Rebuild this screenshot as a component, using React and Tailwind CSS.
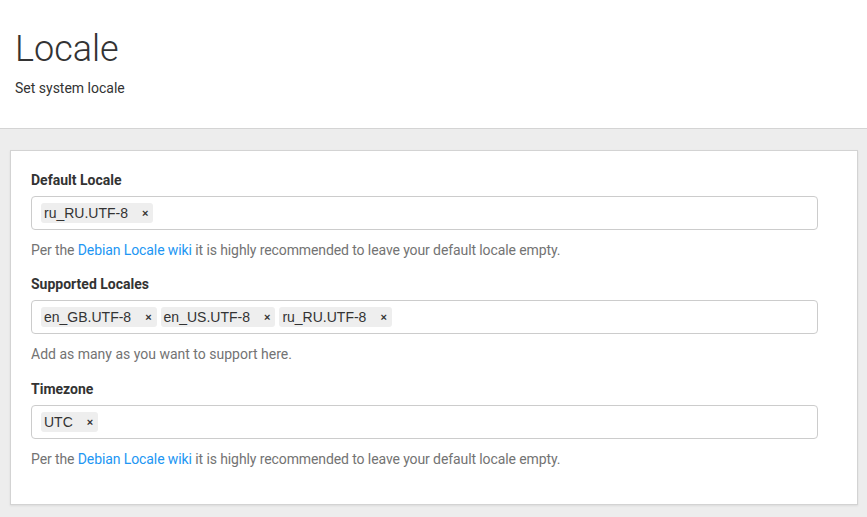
import React from "react";

function Tag({ text }) {
  return (
    <span className="inline-flex items-center h-[20px] bg-[#eeeeee] rounded-[3px] pl-[3px] pr-[5px] text-[14px] text-[#333] font-['Liberation_Sans',Arial,sans-serif] leading-[20px]">
      <span>{text}</span>
      <span className="ml-[14px] text-[11px] font-bold text-[#333] leading-none">×</span>
    </span>
  );
}

function Group({ label, tags, help, gapClass, tight }) {
  return (
    <div className={gapClass}>
      <div className="h-[20px] leading-[20px] text-[14px] font-bold text-[#333] mb-[6px]">{label}</div>
      <div className="h-[34px] border border-[#cccccc] rounded-[4px] flex items-center gap-[4px] px-[9px]">
        {tags.map((t) => (
          <Tag key={t} text={t} />
        ))}
      </div>
      <div className={"mt-[10px] h-[20px] leading-[20px] text-[14px] text-[#737373] " + (tight ? "tracking-[-0.1px]" : "")}>{help}</div>
    </div>
  );
}

const wikiHelp = (
  <>
    Per the <span className="text-[#2196f3]">Debian Locale wiki</span> it is highly recommended to leave your default locale empty.
  </>
);

export default function App() {
  return (
    <div className="min-h-[517px] bg-[#ededed] font-['Roboto','Noto_Sans',sans-serif]">
      <div className="bg-white border-b border-[#d4d4d4] h-[129px] px-[15px] pt-[27px]">
        <h1 className="text-[36px] font-light text-[#333] leading-[44px]">Locale</h1>
        <p className="mt-[7px] text-[14px] text-[#333] leading-[20px]">Set system locale</p>
      </div>
      <div className="pt-[21px] pl-[10px] pr-[9px] pb-[12px]">
        <div className="bg-white border border-[#d3d3d3] shadow-[0_1px_2px_rgba(0,0,0,0.08)] pt-[19px] pb-[35px] pl-[20px] pr-[39px]">
          <Group label="Default Locale" tags={["ru_RU.UTF-8"]} help={wikiHelp} gapClass="mb-[14px]" tight />
          <Group
            label="Supported Locales"
            tags={["en_GB.UTF-8", "en_US.UTF-8", "ru_RU.UTF-8"]}
            help="Add as many as you want to support here."
            gapClass="mb-[15px]"
          />
          <Group label="Timezone" tags={["UTC"]} help={wikiHelp} gapClass="" tight />
        </div>
      </div>
    </div>
  );
}
